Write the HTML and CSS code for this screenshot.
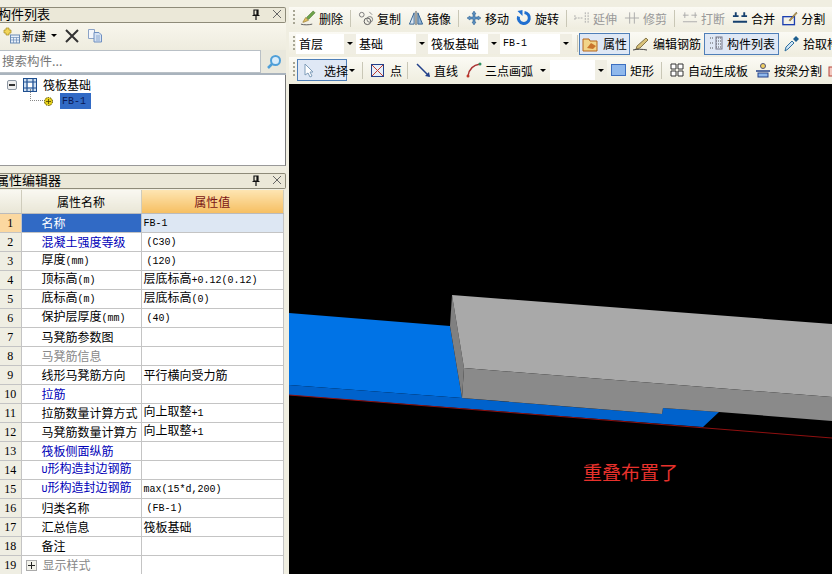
FILE: index.html
```html
<!DOCTYPE html>
<html lang="zh">
<head>
  <meta charset="UTF-8">
  <title>筏板基础 - 构件列表</title>
  <link rel="stylesheet" href="styles.css">
</head>

<body>
  <div class="app">
    <!-- 左侧面板 -->
    <div class="side">
      <div class="title-bar list-title">
        <span class="title-text">构件列表</span>
        <span class="title-btns">
          <svg width="10" height="11" viewBox="0 0 10 11"><path d="M3 1h4v5H3zM1.500 6.500h7M5 6.500V11M6 1v5" fill="none" stroke="#111" stroke-width="1.200"/></svg>
          <svg width="10" height="10" viewBox="0 0 10 10"><path d="M1 1l8 8M9 1l-8 8" stroke="#666" fill="none"/></svg>
        </span>
      </div>
      <div class="list-tools">
        <svg class="new-icon" width="17" height="17" viewBox="0 0 17 17"><path d="M3 1h3v2h2v3H6v2H3V6H1V3h2z" fill="#f3d65a" stroke="#a58a1c" stroke-width=".7"/><rect x="7.500" y="8" width="9" height="8" fill="#e8f0fa" stroke="#6a8bb5"/><path d="M7.500 10.500h9M10.500 10.500v5.500M13.500 10.500v5.500M7.500 13h9" stroke="#6a8bb5" stroke-width=".7"/></svg>
        <span>新建</span>
        <i class="arrow"></i>
        <svg class="del-icon" width="14" height="14" viewBox="0 0 14 14"><path d="M1 1l12 12M13 1L1 13" stroke="#333" stroke-width="2" fill="none"/></svg>
        <svg class="copy-icon" width="16" height="15" viewBox="0 0 16 15"><path d="M1.500 1.500h6v9h-6z" fill="#f4f6fb" stroke="#8ca3c6"/><path d="M7 4.500h5l2.500 2.500v7H7z" fill="#d6e2f3" stroke="#6f8fc0"/><path d="M9 8h4M9 10h4M9 12h4" stroke="#6f8fc0" stroke-width=".7"/></svg>
      </div>
      <div class="search-row">
        <div class="search-input">搜索构件...</div>
        <div class="search-btn">
          <svg width="16" height="16" viewBox="0 0 16 16"><circle cx="9.500" cy="6.500" r="4.500" fill="#d9ecfa" stroke="#4f9fd8" stroke-width="2"/><path d="M6 10l-4 4" stroke="#4f9fd8" stroke-width="2.500"/></svg>
        </div>
      </div>
      <div class="tree">
        <div class="tree-root">
          <span class="expander"></span>
          <svg class="grid-icon" width="14" height="14" viewBox="0 0 14 14"><rect x=".5" y=".5" width="13" height="13" fill="#cfe0f2" stroke="#1f4f8f"/><path d="M4 1v12M10 1v12M1 4h12M1 10h12" stroke="#1f4f8f" stroke-width="1.200"/><rect x="5" y="5" width="4" height="4" fill="#fff"/></svg>
          <span>筏板基础</span>
        </div>
        <div class="tree-leaf">
          <span class="dots"></span>
          <svg width="11" height="11" viewBox="0 0 11 11"><circle cx="5.500" cy="5.500" r="4" fill="#e8d21c" stroke="#4a4200" stroke-dasharray="1.500 1"/><path d="M3 5.500h5M5.500 3v5" stroke="#4a4200" stroke-width=".8"/></svg>
          <span class="leaf-name">FB-1</span>
        </div>
      </div>

      <div class="title-bar prop-title">
        <span class="title-text">属性编辑器</span>
        <span class="title-btns">
          <svg width="10" height="11" viewBox="0 0 10 11"><path d="M3 1h4v5H3zM1.500 6.500h7M5 6.500V11M6 1v5" fill="none" stroke="#111" stroke-width="1.200"/></svg>
          <svg width="10" height="10" viewBox="0 0 10 10"><path d="M1 1l8 8M9 1l-8 8" stroke="#666" fill="none"/></svg>
        </span>
      </div>
      <table class="props">
        <colgroup><col class="c-num"><col class="c-name"><col class="c-val"></colgroup>
        <tr class="head"><th></th><th>属性名称</th><th class="val-head">属性值</th></tr>
        <tr class="current"><td class="num">1</td><td class="name">名称</td><td class="val"><span class="mono">FB-1</span></td></tr>
        <tr><td class="num">2</td><td class="name link">混凝土强度等级</td><td class="val ind"><span class="mono">(C30)</span></td></tr>
        <tr><td class="num">3</td><td class="name">厚度<span class="mono">(mm)</span></td><td class="val ind"><span class="mono">(120)</span></td></tr>
        <tr><td class="num">4</td><td class="name">顶标高<span class="mono">(m)</span></td><td class="val">层底标高<span class="mono">+0.12(0.12)</span></td></tr>
        <tr><td class="num">5</td><td class="name">底标高<span class="mono">(m)</span></td><td class="val">层底标高<span class="mono">(0)</span></td></tr>
        <tr><td class="num">6</td><td class="name">保护层厚度<span class="mono">(mm)</span></td><td class="val ind"><span class="mono">(40)</span></td></tr>
        <tr><td class="num">7</td><td class="name">马凳筋参数图</td><td class="val"></td></tr>
        <tr><td class="num">8</td><td class="name off">马凳筋信息</td><td class="val"></td></tr>
        <tr><td class="num">9</td><td class="name">线形马凳筋方向</td><td class="val">平行横向受力筋</td></tr>
        <tr><td class="num">10</td><td class="name link">拉筋</td><td class="val"></td></tr>
        <tr><td class="num">11</td><td class="name">拉筋数量计算方式</td><td class="val">向上取整<span class="mono">+1</span></td></tr>
        <tr><td class="num">12</td><td class="name">马凳筋数量计算方</td><td class="val">向上取整<span class="mono">+1</span></td></tr>
        <tr><td class="num">13</td><td class="name link">筏板侧面纵筋</td><td class="val"></td></tr>
        <tr><td class="num">14</td><td class="name link"><span class="mono">U</span>形构造封边钢筋</td><td class="val"></td></tr>
        <tr><td class="num">15</td><td class="name link"><span class="mono">U</span>形构造封边钢筋</td><td class="val"><span class="mono">max(15*d,200)</span></td></tr>
        <tr><td class="num">16</td><td class="name">归类名称</td><td class="val ind"><span class="mono">(FB-1)</span></td></tr>
        <tr><td class="num">17</td><td class="name">汇总信息</td><td class="val">筏板基础</td></tr>
        <tr><td class="num">18</td><td class="name">备注</td><td class="val"></td></tr>
        <tr><td class="num">19</td><td class="name off"><span class="plus"></span>显示样式</td><td class="val"></td></tr>
      </table>
    </div>

    <!-- 右侧 -->
    <div class="main">
      <div class="toolbar row-edit">
        <i class="grip"></i>
        <span class="tool"><svg width="17" height="17" viewBox="0 0 17 17"><path d="M1 15c3 1 8 1 12 0" stroke="#555" fill="none"/><path d="M3 13l3-5 3 3-5 2z" fill="#e0c060" stroke="#8a6a20" stroke-width=".6"/><path d="M7 8l7-7 2 2-7 7z" fill="#6fa54a" stroke="#3e6a25" stroke-width=".6"/></svg>删除</span>
        <i class="sep"></i>
        <span class="tool"><svg width="17" height="17" viewBox="0 0 17 17"><circle cx="4" cy="5" r="2.500" fill="none" stroke="#777"/><circle cx="10" cy="12" r="3.500" fill="none" stroke="#555"/><circle cx="12.500" cy="10" r="3" fill="none" stroke="#777"/><path d="M12 2l3 3" stroke="#888"/></svg>复制</span>
        <span class="tool"><svg width="16" height="17" viewBox="0 0 16 17"><path d="M6 3L1 15h5z" fill="#dbe6f2" stroke="#2f5f8f"/><path d="M10 3l5 12h-5z" fill="#8fb2d6" stroke="#2f5f8f"/><path d="M8 1v15" stroke="#444"/></svg>镜像</span>
        <i class="sep"></i>
        <span class="tool"><svg width="16" height="16" viewBox="0 0 16 16"><path d="M8 1l2 3H9v3h3V6l3 2-3 2V9H9v3h1l-2 3-2-3h1V9H4v1L1 8l3-2v1h3V4H6z" fill="#5a8fbf" stroke="#2f5f8f" stroke-width=".5"/></svg>移动</span>
        <span class="tool"><svg width="15" height="16" viewBox="0 0 15 16"><path d="M8 2.500a5.500 5.500 0 1 1-6 4" fill="none" stroke="#1f6fd0" stroke-width="3"/><path d="M1 1l5-1v6z" fill="#1f6fd0"/></svg>旋转</span>
        <i class="sep"></i>
        <span class="tool dim"><svg width="17" height="16" viewBox="0 0 17 16"><path d="M1 8h9M1 5v6M12 2v12M15 2v12" stroke="#aaa" fill="none" stroke-dasharray="2 1"/></svg>延伸</span>
        <span class="tool dim"><svg width="17" height="16" viewBox="0 0 17 16"><path d="M1 8h15M6 2v12M11 2v12" stroke="#aaa" fill="none"/></svg>修剪</span>
        <i class="sep"></i>
        <span class="tool dim"><svg width="17" height="16" viewBox="0 0 17 16"><path d="M1 5h6M10 5h6M1 12h15M3 2v6M14 2v6" stroke="#aaa" fill="none"/></svg>打断</span>
        <span class="tool"><svg width="17" height="16" viewBox="0 0 17 16"><path d="M1 6h6M10 6h6M1 12h15" stroke="#16406e" stroke-width="2" fill="none"/><path d="M4 2v4M13 2v4" stroke="#16406e" stroke-width="2"/></svg>合并</span>
        <span class="tool"><svg width="18" height="17" viewBox="0 0 18 17"><rect x="1" y="7" width="13" height="9" fill="none" stroke="#1c3fb0" stroke-width="1.500"/><path d="M8 11l8-9 1 1-8 9z" fill="#c9a24a" stroke="#5a4a20" stroke-width=".6"/></svg>分割</span>
      </div>

      <div class="toolbar row-select">
        <i class="grip"></i>
        <span class="drop w-floor">首层<b class="drop-btn"><i class="arrow"></i></b></span>
        <span class="drop w-type">基础<b class="drop-btn"><i class="arrow"></i></b></span>
        <span class="drop w-kind">筏板基础<b class="drop-btn"><i class="arrow"></i></b></span>
        <span class="drop w-item"><span class="mono">FB-1</span><b class="drop-btn"><i class="arrow"></i></b></span>
        <i class="sep"></i>
        <span class="tool on t-attr"><svg width="18" height="16" viewBox="0 0 18 16"><path d="M1 3h6l1 2h7v10H1z" fill="#f2d488" stroke="#b5651d"/><path d="M5 12l4-5 5 3-3 3z" fill="#c9742c"/></svg>属性</span>
        <span class="tool t-rebar"><svg width="18" height="16" viewBox="0 0 18 16"><path d="M1 14c4-1 9-1 14 0" stroke="#444" fill="none"/><path d="M5 10l9-8 2 2-8 8-4 1z" fill="#d9c27a" stroke="#5a4a20" stroke-width=".7"/></svg>编辑钢筋</span>
        <span class="tool on t-list"><svg width="16" height="15" viewBox="0 0 16 15"><path d="M2 2h3M2 7h3M2 12h3M8 2h6M8 5h6M8 8h6M8 11h6" stroke="#555" stroke-dasharray="1 1" fill="none"/><rect x="8" y="1" width="6" height="12" fill="none" stroke="#778"/></svg>构件列表</span>
        <span class="tool"><svg width="16" height="17" viewBox="0 0 16 17"><path d="M1 16l1-4 6-6 2 2-6 6z" fill="#cfe4f4" stroke="#2f6f9f"/><path d="M9 4l3-3 3 3-3 3z" fill="#1f5f8f"/></svg>拾取构件</span>
      </div>

      <div class="toolbar row-draw">
        <i class="grip"></i>
        <span class="tool on pick"><svg width="12" height="15" viewBox="0 0 12 15"><path d="M2 1v11l3-2 2 4 2-1-2-4h3z" fill="#fff" stroke="#7f9db9"/></svg>选择</span>
        <i class="arrow a-pick"></i>
        <i class="sep"></i>
        <span class="tool t-point"><svg width="13" height="13" viewBox="0 0 13 13"><rect x=".5" y=".5" width="12" height="12" fill="#e6eef8" stroke="#22408a"/><path d="M1 1l11 11M12 1L1 12" stroke="#c0392b"/></svg>点</span>
        <i class="sep"></i>
        <span class="tool t-line"><svg width="15" height="15" viewBox="0 0 15 15"><path d="M1 1l12 12" stroke="#22408a" stroke-width="1.500"/><path d="M14 14l-5-1 4-4z" fill="#22408a"/></svg>直线</span>
        <span class="tool t-arc"><svg width="16" height="16" viewBox="0 0 16 16"><path d="M2 14C3 7 7 3 14 2" fill="none" stroke="#a33" stroke-width="1.500"/><circle cx="2" cy="14" r="1.500" fill="#c0392b"/><circle cx="14" cy="2" r="1.500" fill="#2f8f5f"/></svg>三点画弧</span>
        <i class="arrow"></i>
        <span class="drop w-mode"><b class="drop-btn"><i class="arrow"></i></b></span>
        <span class="tool t-rect"><svg width="15" height="12" viewBox="0 0 15 12"><rect x=".5" y=".5" width="14" height="11" fill="#8fb8ec" stroke="#3c6fc0"/></svg>矩形</span>
        <i class="sep"></i>
        <span class="tool t-auto"><svg width="14" height="14" viewBox="0 0 14 14"><path d="M1 1h5v5H1zM8 1h5v5H8zM1 8h5v5H1zM8 8h5v5H8z" fill="#fff" stroke="#333"/></svg>自动生成板</span>
        <span class="tool t-beam"><svg width="16" height="16" viewBox="0 0 16 16"><circle cx="8" cy="4" r="2.500" fill="#f0d060" stroke="#557"/><path d="M1 9h14" stroke="#22408a" stroke-width="1.500"/><rect x="3" y="11" width="10" height="4" fill="#8fb8ec" stroke="#22408a"/></svg>按梁分割</span>
        <svg width="14" height="14" viewBox="0 0 14 14"><rect x="1" y="4" width="12" height="9" fill="#f2c9c0" stroke="#b5443a"/></svg>
      </div>

      <div class="view">
        <svg class="scene" width="543" height="490" viewBox="289 84 543 490">
          <polygon points="289,313 450,326 462,398 289,385" fill="#0073e6"/>
          <polygon points="289,385 462,398 560,406 662,414 663,408 719,412 703,427 289,395" fill="#0062cc"/>
          <polygon points="452,295 450,326 462,398 464,368" fill="#808080"/>
          <polygon points="452,295 832,324 832,397 464,368" fill="#a9a9a9"/>
          <polygon points="464,368 832,397 832,421 719,412 663,408 662,414 462,398" fill="#8a8a8a"/>
          <line x1="289" y1="395" x2="832" y2="438" stroke="#8f1010"/>
        </svg>
        <span class="warn">重叠布置了</span>
      </div>
    </div>
  </div>
</body>
</html>
```

FILE: styles.css
```css
* {
  box-sizing: border-box;
  padding: 0;
  margin: 0;
}
html, body {
  width: 832px;
  height: 574px;
  overflow: hidden;
  font-size: 12px;
  font-family: "Noto Sans CJK SC", "Liberation Sans", sans-serif;
  color: #000;
  background-color: #f0eee1;
}
i, b { display: block; font-style: normal; }
svg { display: block; flex: none; }
.mono {
  font-family: "Liberation Mono", monospace;
  font-size: 10px;
}
.app {
  display: flex;
  width: 832px;
  height: 574px;
  overflow: hidden;
}

/* 左侧面板 */
.side {
  width: 289px;
  padding: 7px 3px 0 0;
  flex: none;
}
.title-bar {
  display: flex;
  align-items: center;
  justify-content: space-between;
  height: 16px;
  padding: 0 3px 2px 0;
  background-color: #ebe8d8;
  border: 1px solid #8e8b79;
  border-left: 0;
  border-radius: 0 2px 2px 0;
  font-size: 13px;
  line-height: 14px;
}
.list-title .title-text { margin-left: -2px; }
.prop-title .title-text { margin-left: -4px; }
.title-btns {
  display: flex;
  align-items: center;
  gap: 11px;
}
.list-tools {
  display: flex;
  align-items: center;
  height: 27px;
  padding: 0 0 2px 3px;
  background: linear-gradient(#f8f6ec, #eeecdf);
}
.list-tools .arrow { margin-left: 5px; }
.del-icon { margin-left: 8px; }
.copy-icon { margin-left: 8px; }
.new-icon { margin-right: 2px; }
.arrow {
  width: 0;
  height: 0;
  border: 3px solid transparent;
  border-top: 3px solid #000;
  border-bottom: 0;
  flex: none;
}
.search-row {
  display: flex;
  height: 25px;
  border-bottom: 2px solid #a9b3bd;
}
.search-input {
  width: 261px;
  padding-left: 2px;
  background-color: #fff;
  border: 1px solid #b9c0c6;
  border-left: 0;
  color: #777;
  line-height: 20px;
  font-size: 12.5px;
}
.search-btn {
  width: 25px;
  display: flex;
  align-items: center;
  justify-content: center;
  background-color: #e9e8dd;
}
.tree {
  height: 91px;
  padding-top: 1px;
  background-color: #fff;
  border-right: 1px solid #777;
  border-bottom: 1px solid #999;
}
.tree-root {
  display: flex;
  align-items: center;
  height: 17px;
  padding-left: 7px;
}
.expander {
  position: relative;
  width: 10px;
  height: 10px;
  margin-right: 6px;
  background-color: #eee;
  border: 1px solid #8d97a3;
  border-radius: 2px;
}
.expander::after {
  content: "";
  position: absolute;
  top: 3px;
  left: 1px;
  width: 6px;
  height: 2px;
  background-color: #333;
}
.grid-icon { margin-right: 6px; }
.tree-leaf {
  display: flex;
  align-items: center;
  height: 16px;
  padding-left: 30px;
}
.dots {
  width: 13px;
  height: 12px;
  margin-top: -12px;
  border-left: 1px dotted #888;
  border-bottom: 1px dotted #888;
}
.leaf-name {
  width: 31px;
  height: 16px;
  margin-left: 6px;
  padding: 1px 0 0 2px;
  background-color: #316ac5;
  color: #0b1a55;
  font-family: "Liberation Mono", monospace;
  font-size: 10px;
  line-height: 15px;
}
.prop-title { margin-top: 7px; }

/* 属性表 */
.props {
  width: 284px;
  margin-top: 1px;
  table-layout: fixed;
  border-collapse: collapse;
  background-color: #fff;
  border-right: 1px solid #8a8a8a;
}
.c-num { width: 21px; }
.c-name { width: 120px; }
.props tr { height: 19px; }
.props .head { height: 23px; }
.props th {
  padding-top: 1px;
  font-weight: 400;
  font-size: 12px;
  line-height: 14px;
  background: linear-gradient(#f9f8f1, #e9e6d6);
  border-right: 1px solid #cfccbc;
  border-bottom: 1px solid #bbb;
}
.props .val-head {
  background: linear-gradient(#fde5b2, #f6bf62);
  color: #7a1616;
}
.props td {
  height: 19px;
  padding: 0;
  line-height: 14px;
  white-space: nowrap;
  overflow: hidden;
  border: 1px solid #c4c4c4;
  border-left: 0;
  border-top: 0;
}
.num {
  text-align: center;
  background-color: #efeee3;
  font-family: "Liberation Serif", serif;
}
.name { padding-left: 20px !important; }
.val { padding-left: 2px !important; }
.ind { padding-left: 5px !important; }
.link { color: #0000b8; }
.off { color: #888; }
.current .num { background-color: #fbd8a0; }
.current .name { background-color: #316ac5; color: #fff; }
.current .val { background-color: #dde7f3; }
.plus {
  display: inline-block;
  width: 11px;
  height: 11px;
  margin: 0 6px 0 -16px;
  vertical-align: -1px;
  background:
    linear-gradient(#222, #222) center / 7px 1px no-repeat,
    linear-gradient(#222, #222) center / 1px 7px no-repeat,
    #f2f2ea;
  border: 1px solid #aaa;
}

/* 工具栏 */
.main {
  flex: 1;
  min-width: 0;
  overflow: hidden;
  padding-top: 7px;
}
.toolbar {
  display: flex;
  align-items: center;
  width: 560px;
  white-space: nowrap;
  background: linear-gradient(#fbfaf4, #efeddf);
}
.row-edit { height: 22px; gap: 7px; }
.row-select { height: 23px; margin-top: 3px; }
.row-draw { height: 26px; margin-top: 2px; }
.grip {
  width: 2px;
  height: 16px;
  margin: 0 1px 0 4px;
  background: repeating-linear-gradient(#a8a694 0 2px, transparent 2px 4px);
  flex: none;
}
.row-edit .grip { margin-right: -2px; }
.sep {
  width: 1px;
  height: 17px;
  background-color: #c9c7b6;
  flex: none;
}
.tool {
  display: flex;
  align-items: center;
  gap: 3px;
  flex: none;
}
.row-edit .tool { gap: 0; }
.row-edit .tool svg {
  width: 16px;
  height: 16px;
  margin-right: 3px;
}
.dim { color: #999; }
.on {
  height: 22px;
  padding: 0 2px;
  background-color: #dfe8f5;
  border: 1px solid #4f7fb8;
}
.drop {
  display: flex;
  align-items: center;
  justify-content: space-between;
  height: 20px;
  padding-left: 3px;
  background-color: #fff;
  flex: none;
}
.drop-btn {
  display: flex;
  align-items: center;
  justify-content: center;
  width: 12px;
  height: 20px;
  margin-left: auto;
  background-color: #f0eee3;
}
.w-floor { width: 60px; }
.w-type { width: 72px; }
.w-kind { width: 72px; }
.w-item { width: 72px; margin-right: 5px; }
.row-select .sep { margin-right: 1px; }
.t-attr { margin-right: 2px; }
.t-rebar { margin-right: 3px; }
.t-list { padding: 0 3px; margin-right: 5px; }

/* 绘图工具行 */
.row-draw .grip { margin-right: 2px; }
.row-draw .sep { margin-right: 8px; }
.row-draw .pick { width: 50px; gap: 9px; padding-left: 5px; margin-right: 2px; }
.row-draw > .arrow { margin-right: 4px; }
.row-draw .a-pick { margin-right: 7px; }
.t-point { gap: 6px; margin-right: 5px; }
.t-line { margin-right: 8px; }
.t-arc { margin-right: 7px; }
.t-rect { gap: 4px; margin-right: 7px; }
.t-auto { gap: 4px; margin-right: 7px; }
.t-beam { margin-right: 6px; }
.w-mode { width: 57px; margin-right: 4px; }

/* 三维视图 */
.view {
  position: relative;
  width: 543px;
  height: 490px;
  margin-top: 1px;
  background-color: #000;
}
.scene { position: absolute; top: 0; left: 0; }
.warn {
  position: absolute;
  left: 294px;
  top: 376px;
  color: #e8312c;
  font-size: 19px;
  line-height: 24px;
}
```
